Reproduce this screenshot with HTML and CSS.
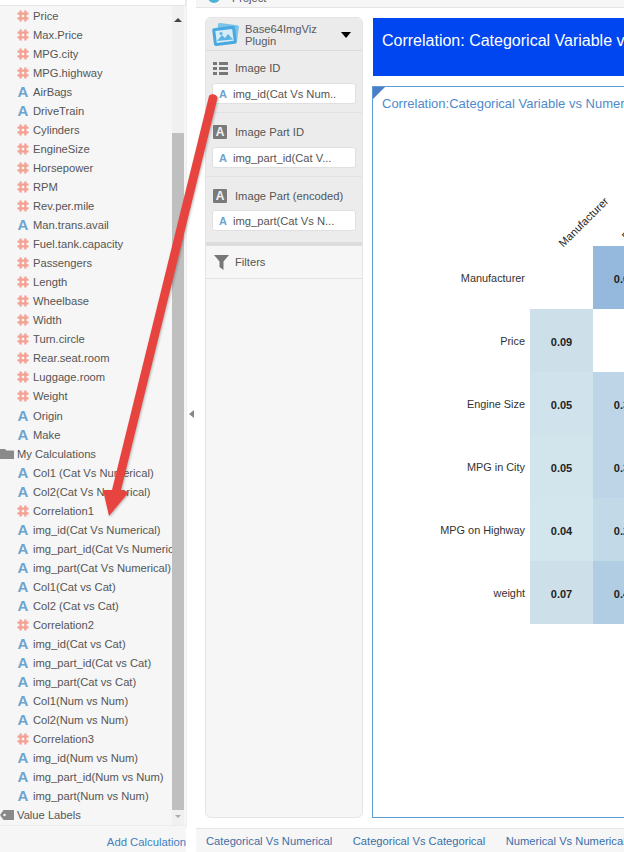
FILE: index.html
```html
<!DOCTYPE html>
<html lang="en">
<head>
<meta charset="utf-8">
<title>Correlation</title>
<link rel="stylesheet" href="styles.css">
</head>
<body>
<svg class="defs" width="0" height="0" aria-hidden="true">
  <symbol id="hash" viewBox="0 0 12 12">
    <path d="M3.6 .5V11.5M8.4 .5V11.5M.5 3.7H11.5M.5 8.3H11.5" fill="none" stroke="#f4a193" stroke-width="2.3"/>
  </symbol>
</svg>
<div class="app">
  <aside class="sidebar">
    <div class="search"></div>
    <div class="list-wrap">
      <ul class="fields">
        <li class="row"><svg class="ic"><use href="#hash"/></svg>Price</li>
        <li class="row"><svg class="ic"><use href="#hash"/></svg>Max.Price</li>
        <li class="row"><svg class="ic"><use href="#hash"/></svg>MPG.city</li>
        <li class="row"><svg class="ic"><use href="#hash"/></svg>MPG.highway</li>
        <li class="row"><span class="ic-a">A</span>AirBags</li>
        <li class="row"><span class="ic-a">A</span>DriveTrain</li>
        <li class="row"><svg class="ic"><use href="#hash"/></svg>Cylinders</li>
        <li class="row"><svg class="ic"><use href="#hash"/></svg>EngineSize</li>
        <li class="row"><svg class="ic"><use href="#hash"/></svg>Horsepower</li>
        <li class="row"><svg class="ic"><use href="#hash"/></svg>RPM</li>
        <li class="row"><svg class="ic"><use href="#hash"/></svg>Rev.per.mile</li>
        <li class="row"><span class="ic-a">A</span>Man.trans.avail</li>
        <li class="row"><svg class="ic"><use href="#hash"/></svg>Fuel.tank.capacity</li>
        <li class="row"><svg class="ic"><use href="#hash"/></svg>Passengers</li>
        <li class="row"><svg class="ic"><use href="#hash"/></svg>Length</li>
        <li class="row"><svg class="ic"><use href="#hash"/></svg>Wheelbase</li>
        <li class="row"><svg class="ic"><use href="#hash"/></svg>Width</li>
        <li class="row"><svg class="ic"><use href="#hash"/></svg>Turn.circle</li>
        <li class="row"><svg class="ic"><use href="#hash"/></svg>Rear.seat.room</li>
        <li class="row"><svg class="ic"><use href="#hash"/></svg>Luggage.room</li>
        <li class="row"><svg class="ic"><use href="#hash"/></svg>Weight</li>
        <li class="row"><span class="ic-a">A</span>Origin</li>
        <li class="row"><span class="ic-a">A</span>Make</li>
        <li class="row group"><svg class="ic-group" viewBox="0 0 14 10"><path d="M0 0H5L6.500 1.500H14V10H0Z" fill="#8a8a8a"/></svg>My Calculations</li>
        <li class="row"><span class="ic-a">A</span>Col1 (Cat Vs Numerical)</li>
        <li class="row"><span class="ic-a">A</span>Col2(Cat Vs Numerical)</li>
        <li class="row"><svg class="ic"><use href="#hash"/></svg>Correlation1</li>
        <li class="row"><span class="ic-a">A</span>img_id(Cat Vs Numerical)</li>
        <li class="row"><span class="ic-a">A</span>img_part_id(Cat Vs Numerical)</li>
        <li class="row"><span class="ic-a">A</span>img_part(Cat Vs Numerical)</li>
        <li class="row"><span class="ic-a">A</span>Col1(Cat vs Cat)</li>
        <li class="row"><span class="ic-a">A</span>Col2 (Cat vs Cat)</li>
        <li class="row"><svg class="ic"><use href="#hash"/></svg>Correlation2</li>
        <li class="row"><span class="ic-a">A</span>img_id(Cat vs Cat)</li>
        <li class="row"><span class="ic-a">A</span>img_part_id(Cat vs Cat)</li>
        <li class="row"><span class="ic-a">A</span>img_part(Cat vs Cat)</li>
        <li class="row"><span class="ic-a">A</span>Col1(Num vs Num)</li>
        <li class="row"><span class="ic-a">A</span>Col2(Num vs Num)</li>
        <li class="row"><svg class="ic"><use href="#hash"/></svg>Correlation3</li>
        <li class="row"><span class="ic-a">A</span>img_id(Num vs Num)</li>
        <li class="row"><span class="ic-a">A</span>img_part_id(Num vs Num)</li>
        <li class="row"><span class="ic-a">A</span>img_part(Num vs Num)</li>
        <li class="row group"><svg class="ic-group" viewBox="0 0 14 10"><path d="M3.500 0H14V10H3.500L0 5Z" fill="#8a8a8a"/><circle cx="4.500" cy="5" r="1.200" fill="#fff"/></svg>Value Labels</li>
      </ul>
      <div class="scrollbar">
        <span class="arrow-up"></span>
        <span class="thumb"></span>
        <span class="arrow-down"></span>
      </div>
    </div>
    <div class="add-calc">Add Calculation</div>
  </aside>

  <div class="splitter"><span class="split-arrow"></span></div>

  <div class="content">
    <div class="topbar">
      <svg class="project-ic" viewBox="0 0 10 10"><circle cx="5" cy="5" r="5" fill="#4bb3d6"/></svg>
      <span class="project">Project</span>
    </div>
    <div class="work">
      <section class="panel">
        <header class="plugin">
          <svg class="plugin-ic" viewBox="0 0 28 24">
            <rect x="5" y="1" width="21" height="17" rx="2" transform="rotate(8 15 10)" fill="#7cc4ea"/>
            <rect x="1" y="4" width="23" height="18" rx="2" transform="rotate(-7 12 13)" fill="#4aa8e0"/>
            <rect x="4" y="7" width="17" height="12" transform="rotate(-7 12 13)" fill="#d6ecf8"/>
            <path d="M5 18L10 12L13 15L16 11L21 16.500Z" fill="#5db2e4"/>
            <circle cx="9" cy="10.500" r="1.600" fill="#5db2e4"/>
          </svg>
          <span class="plugin-name">Base64ImgViz Plugin</span>
          <span class="caret"></span>
        </header>
        <div class="slot first">
          <div class="slot-title">
            <svg class="slot-ic" viewBox="0 0 15 15"><path d="M0 1H4V4H0ZM6 1H15V4H6ZM0 6H4V9H0ZM6 6H15V9H6ZM0 11H4V14H0ZM6 11H15V14H6Z" fill="#777"/></svg>
            Image ID
          </div>
          <div class="pill"><span class="ic-a small">A</span>img_id(Cat Vs Num..</div>
        </div>
        <div class="slot">
          <div class="slot-title"><span class="box-a">A</span>Image Part ID</div>
          <div class="pill"><span class="ic-a small">A</span>img_part_id(Cat V...</div>
        </div>
        <div class="slot last">
          <div class="slot-title"><span class="box-a">A</span>Image Part (encoded)</div>
          <div class="pill"><span class="ic-a small">A</span>img_part(Cat Vs N...</div>
        </div>
        <div class="filters">
          <svg class="slot-ic filter-ic" viewBox="0 0 15 15"><path d="M0 0H15L9.500 6.500V15L5.500 12V6.500Z" fill="#777"/></svg>
          Filters
        </div>
      </section>

      <section class="canvas">
        <div class="banner">Correlation: Categorical Variable vs Numerical</div>
        <div class="viz">
          <span class="corner"></span>
          <div class="viz-title">Correlation:Categorical Variable vs Numerical</div>
          <div class="heat">
            <div class="col-heads">
              <span class="col-head"><span>Manufacturer</span></span>
              <span class="col-head"><span>Price</span></span>
            </div>
            <div class="h-row"><span class="h-label">Manufacturer</span><span class="cell"></span><span class="cell c-a">0.09</span></div>
            <div class="h-row"><span class="h-label">Price</span><span class="cell c-b">0.09</span><span class="cell"></span></div>
            <div class="h-row"><span class="h-label">Engine Size</span><span class="cell c-c">0.05</span><span class="cell c-g">0.31</span></div>
            <div class="h-row"><span class="h-label">MPG in City</span><span class="cell c-d">0.05</span><span class="cell c-g">0.31</span></div>
            <div class="h-row"><span class="h-label">MPG on Highway</span><span class="cell c-e">0.04</span><span class="cell c-h">0.28</span></div>
            <div class="h-row"><span class="h-label">weight</span><span class="cell c-b">0.07</span><span class="cell c-i">0.42</span></div>
          </div>
        </div>
      </section>
    </div>
    <nav class="tabs">
      <span class="tab">Categorical Vs Numerical</span>
      <span class="tab">Categorical Vs Categorical</span>
      <span class="tab">Numerical Vs Numerical</span>
    </nav>
  </div>
</div>
<svg class="annotation" viewBox="0 0 624 852" aria-hidden="true">
  <path d="M209 96C211 93 217 94 217.500 98L121 490L129 492L109 516L103 490L112 490Z" fill="#e8443f"/>
</svg>
</body>
</html>
```
FILE: styles.css
```css
* { box-sizing: border-box; }
html, body { margin: 0; padding: 0; width: 624px; height: 852px; overflow: hidden; background: #fff; }
body { font-family: "Liberation Sans", Arial, sans-serif; font-size: 11.200px; color: #555; position: relative; }
.defs { position: absolute; }

.app { display: flex; width: 624px; height: 852px; overflow: hidden; }

/* sidebar */
.sidebar { width: 186px; flex: none; display: flex; flex-direction: column; background: #f6f6f6; }
.search { height: 6px; flex: none; background: #fff; border-bottom: 1px solid #e6e6e6; border-right: 1px solid #e6e6e6; }
.list-wrap { height: 820px; flex: none; display: flex; border-bottom: 1px solid #ececec; }
.fields { list-style: none; margin: 0; padding: 0; width: 172px; flex: none; overflow: hidden; }
.row { height: 19.050px; padding-left: 17px; display: flex; align-items: center; white-space: nowrap; overflow: hidden; }
.group { padding-left: 0; }
.ic { width: 12px; height: 12px; margin-right: 4px; flex: none; }
.ic-a { width: 12px; margin-right: 4px; flex: none; font-weight: bold; font-size: 15px; line-height: 14px; color: #6fa3cf; text-align: center; }
.ic-a.small { font-size: 11px; width: 10px; margin-right: 5px; }
.ic-group { width: 14px; height: 10px; margin-right: 3px; flex: none; }

.scrollbar { width: 12px; flex: none; background: #f0f0f0; display: flex; flex-direction: column; align-items: center; }
.arrow-up { margin-top: 12px; border: 4px solid transparent; border-top: 0; border-bottom: 4px solid #444; }
.thumb { width: 12px; height: 677px; margin-top: 111px; background: #bfbfbf; }
.arrow-down { margin-top: 5px; border: 3px solid transparent; border-bottom: 0; border-top: 3px solid #aaa; }

.add-calc { flex: 1; display: flex; align-items: center; justify-content: flex-end; font-size: 11.300px; color: #3f7fc0; padding-top: 5px; }

.splitter { width: 10px; flex: none; background: #fff; border-left: 1px solid #f0f0f0; display: flex; align-items: center; justify-content: center; height: 828px; }
.split-arrow { border: 4px solid transparent; border-left: 0; border-right: 5px solid #888; }

/* right */
.content { flex: 1; min-width: 0; display: flex; flex-direction: column; }
.topbar { height: 8px; flex: none; background: #f6f6f6; border-bottom: 1px solid #e4e4e4; overflow: hidden; display: flex; align-items: flex-end; padding-left: 12px; }
.project-ic { width: 12px; height: 12px; flex: none; margin-bottom: 4px; margin-right: 12px; }
.project { font-size: 11px; line-height: 14px; margin-bottom: 2px; }

.work { flex: 1; min-height: 0; display: flex; gap: 9px; padding: 9px 0 10px 9px; }

.panel { width: 158px; flex: none; background: #f6f6f6; border: 1px solid #e4e4e4; border-radius: 6px; overflow: hidden; }
.plugin { height: 33px; background: #ebebeb; border-bottom: 1px solid #dcdcdc; display: flex; align-items: center; padding: 2px 0 0 6px; }
.plugin-ic { width: 28px; height: 24px; flex: none; margin-right: 5px; }
.plugin-name { width: 90px; font-size: 11.200px; line-height: 12.500px; color: #5a5a5a; }
.caret { margin-left: 6px; border: 5px solid transparent; border-bottom: 0; border-top: 6px solid #000; }

.slot { height: 64px; background: #ececec; border-bottom: 1px solid #e2e2e2; padding: 9px 6px 0; }
.slot.first { height: 62px; padding-top: 7px; }
.slot.last { height: 69px; border-bottom: 4px solid #dcdcdc; }
.slot.last .pill { margin-top: 4px; }
.slot-title { display: flex; align-items: center; height: 20px; color: #555; margin-left: 1px; }
.slot-ic { width: 15px; height: 15px; margin-right: 7px; flex: none; }
.slot-ic.filter-ic { margin-right: 6px; }
.box-a { width: 14px; height: 14px; margin-right: 8px; flex: none; background: #7a7a7a; color: #f4f4f4; font-weight: bold; font-size: 12px; line-height: 14px; text-align: center; border-radius: 1px; }
.pill { height: 21px; margin-top: 5px; background: #fff; border: 1px solid #e0e0e0; border-radius: 3px; display: flex; align-items: center; padding-left: 5px; color: #555; white-space: nowrap; overflow: hidden; }
.filters { height: 33px; border-bottom: 1px solid #e2e2e2; display: flex; align-items: center; padding-left: 8px; background: #f6f6f6; }

.canvas { flex: none; width: 420px; padding-top: 1px; display: flex; flex-direction: column; gap: 10px; }
.banner { height: 58px; margin-left: 1px; background: #0046f0; color: #fff; font-size: 16px; padding: 14px 0 0 9px; line-height: 18px; white-space: nowrap; overflow: hidden; }
.viz { flex: 1; position: relative; border: 1px solid #5d9bd3; background: #fff; }
.corner { position: absolute; left: 0; top: 0; border-style: solid; border-width: 12px 12px 0 0; border-color: #4a7fc7 transparent transparent transparent; }
.viz-title { height: 34px; padding: 9px 0 0 9px; font-size: 13px; line-height: 15px; color: #4f8ac9; white-space: nowrap; }

.heat { display: flex; flex-direction: column; }
.col-heads { height: 125px; display: flex; padding-left: 157px; }
.col-head { width: 63px; display: flex; align-items: flex-end; justify-content: center; overflow: visible; }
.col-head span { font-size: 11px; color: #222; white-space: nowrap; transform-origin: center; transform: translate(22px, -18px) rotate(-45deg); }
.col-head + .col-head span { transform: translate(8px, -11px) rotate(-45deg); }
.h-row { height: 63px; display: flex; }
.h-label { width: 157px; flex: none; padding-right: 5px; text-align: right; line-height: 65px; font-size: 10.900px; color: #333; }
.cell { width: 63px; flex: none; text-align: center; line-height: 67px; font-weight: bold; font-size: 11px; color: #222; }
.c-a { background: #94b9dc; }
.c-b { background: #cddfe9; }
.c-c { background: #d0e2eb; }
.c-d { background: #d2e4ec; }
.c-e { background: #d4e6ed; }
.c-g { background: #bdd5e6; }
.c-h { background: #c2d9e8; }
.c-i { background: #b0cde3; }

.tabs { height: 24px; flex: none; background: #f6f6f6; border-top: 1px solid #e6e6e6; display: flex; align-items: center; gap: 20.500px; padding-left: 10px; white-space: nowrap; }
.tab { font-size: 11.200px; color: #3a6fa8; }

.annotation { position: absolute; left: 0; top: 0; width: 624px; height: 852px; pointer-events: none; filter: drop-shadow(1px 1px 1px rgba(0, 0, 0, .25)); }
```
